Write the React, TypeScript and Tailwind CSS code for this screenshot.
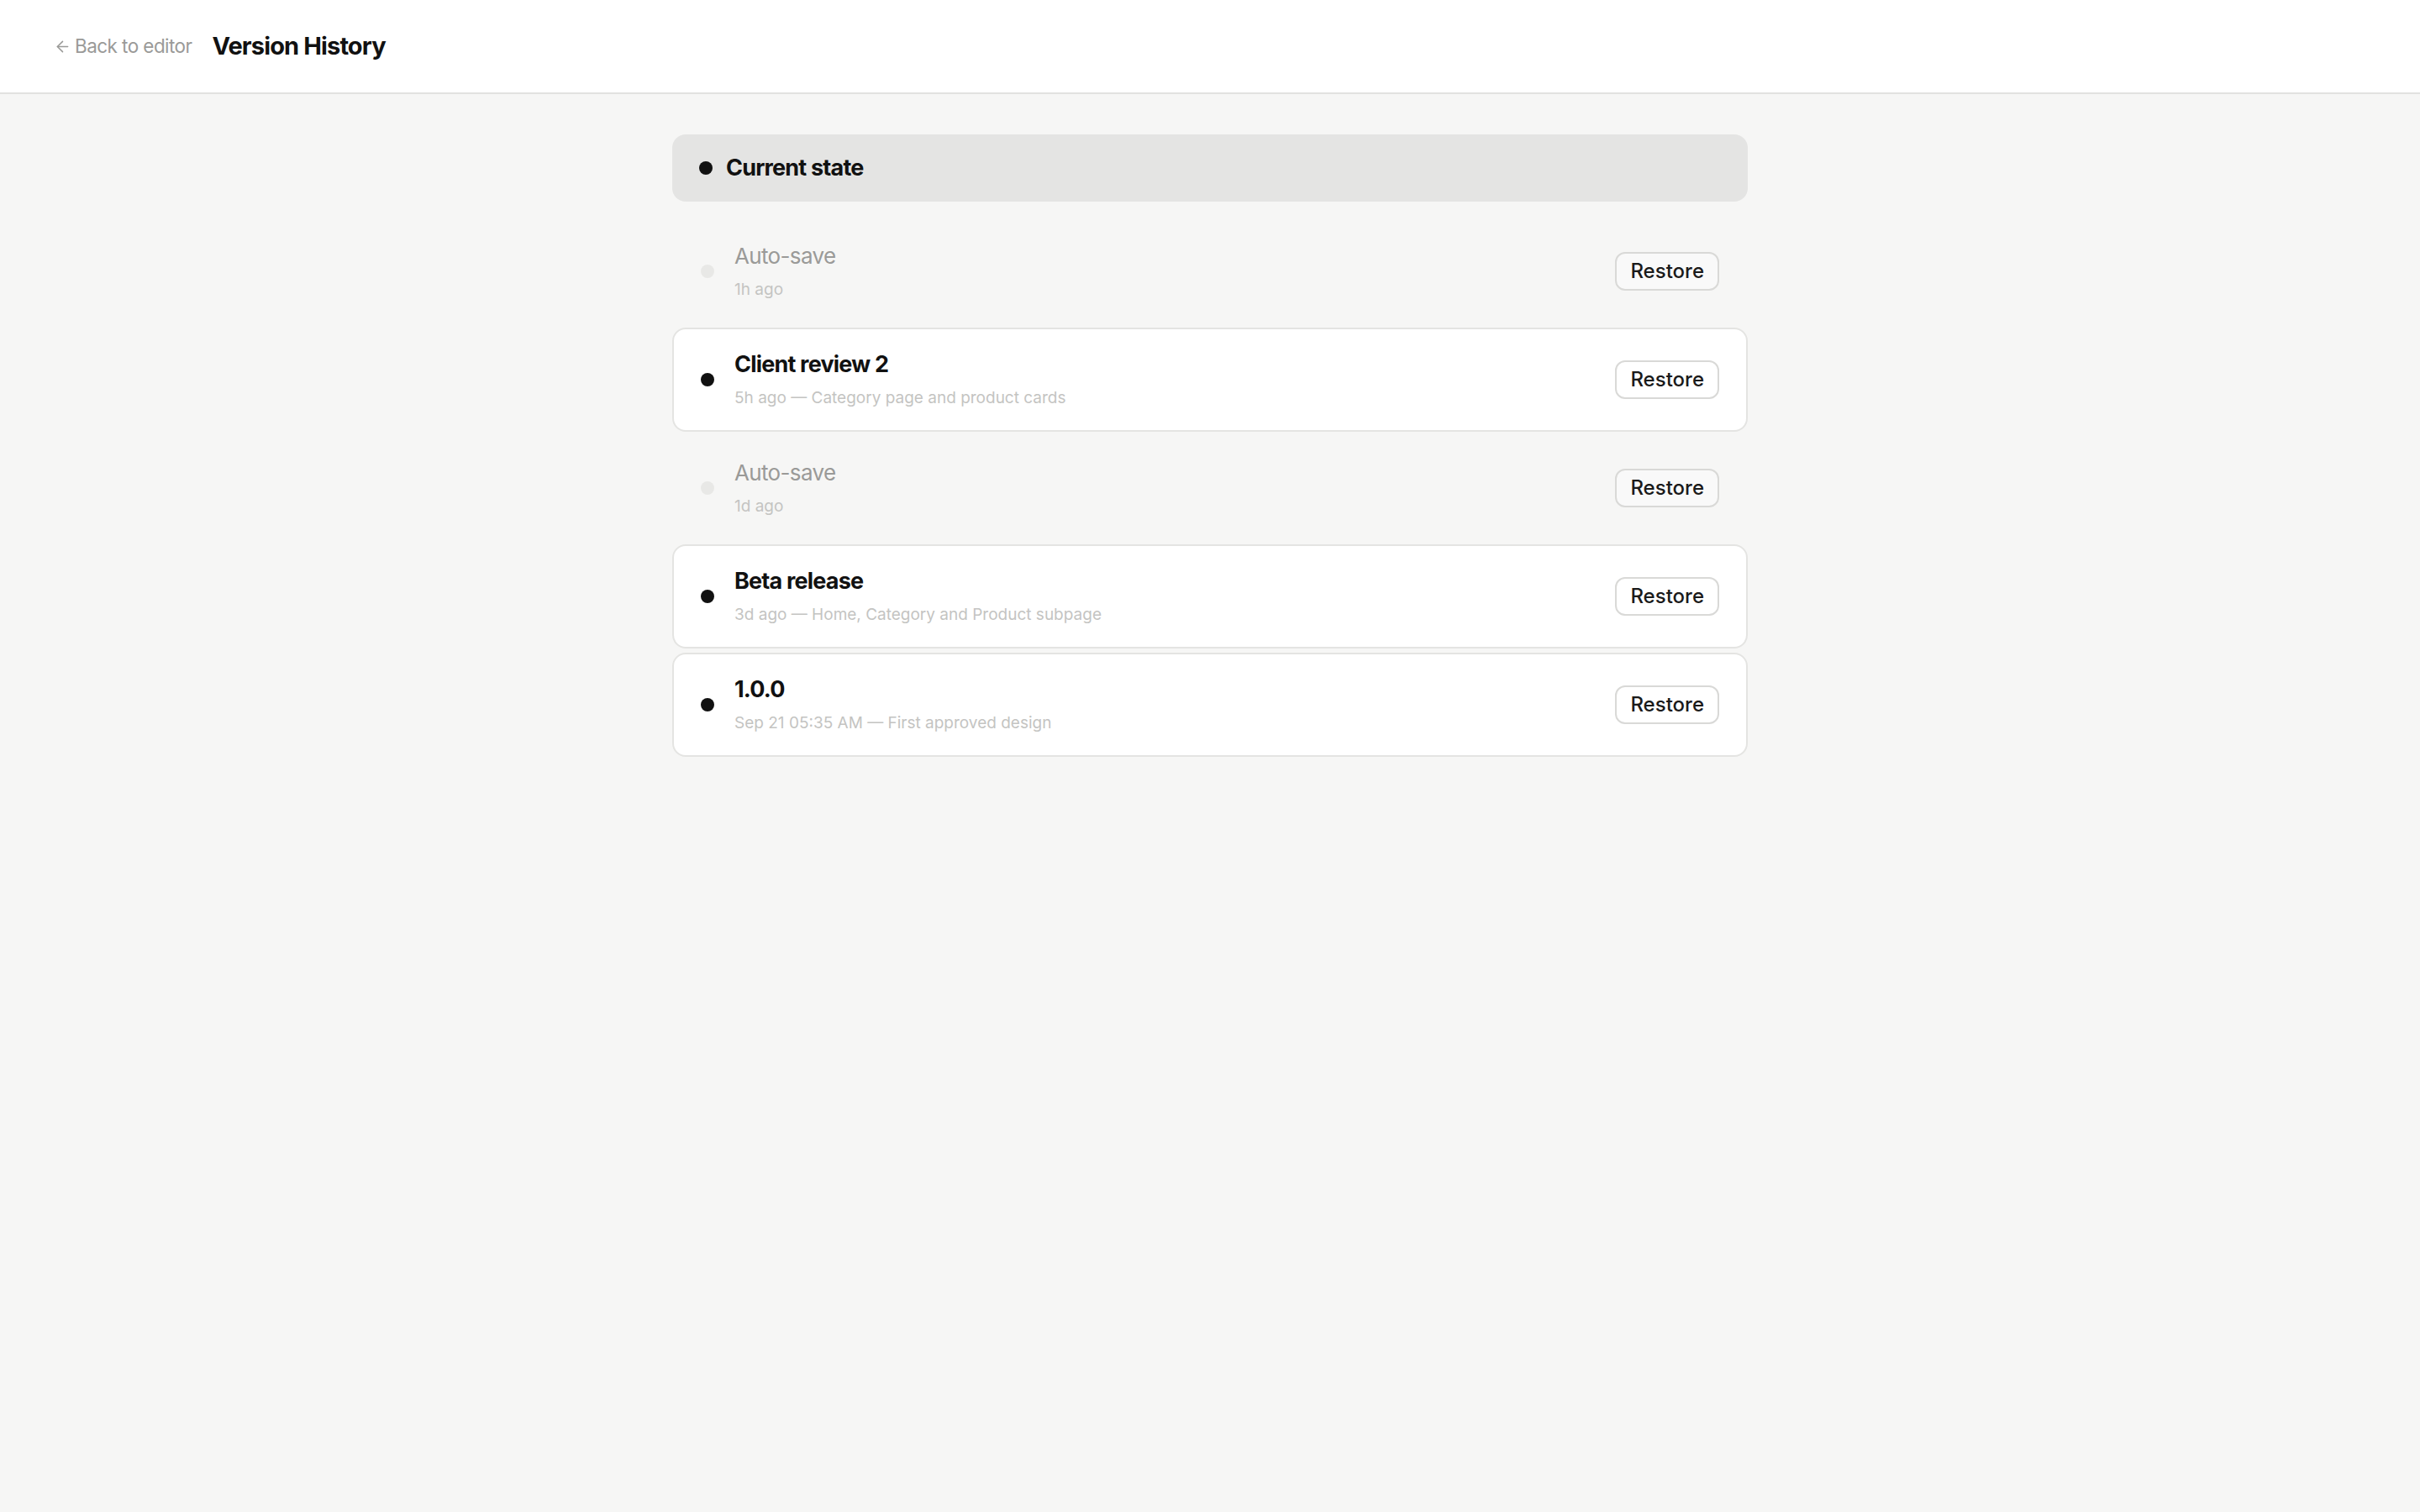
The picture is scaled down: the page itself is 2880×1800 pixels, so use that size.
import { ArrowLeft } from "lucide-react";

type Version = {
  title: string;
  meta: string;
  auto?: boolean;
};

const versions: Version[] = [
  { title: "Auto-save", meta: "1h ago", auto: true },
  { title: "Client review 2", meta: "5h ago — Category page and product cards" },
  { title: "Auto-save", meta: "1d ago", auto: true },
  { title: "Beta release", meta: "3d ago — Home, Category and Product subpage" },
  { title: "1.0.0", meta: "Sep 21 05:35 AM — First approved design" },
];

function VersionRow({ v }: { v: Version }) {
  return (
    <div
      className={
        v.auto
          ? "flex items-center gap-6 rounded-2xl border-2 border-transparent px-8 py-[22px]"
          : "flex items-center gap-6 rounded-2xl border-2 border-[#e4e4e2] bg-white px-8 py-[22px]"
      }
    >
      <span
        className={
          v.auto
            ? "h-4 w-4 shrink-0 rounded-full bg-[#e8e8e6]"
            : "h-4 w-4 shrink-0 rounded-full bg-[#111111]"
        }
      />
      <div className="flex min-w-0 flex-1 flex-col">
        <div
          className={
            v.auto
              ? "text-[26px] leading-10 tracking-tight text-[#9a9a98]"
              : "text-[27px] font-bold leading-10 tracking-[-0.03em] text-[#111111]"
          }
        >
          {v.title}
        </div>
        <div className="mt-1 text-[19px] leading-8 text-[#c4c4c2]">{v.meta}</div>
      </div>
      <button className="rounded-xl border-2 border-[#d9d9d7] bg-white/40 px-4 py-1 text-[24px] font-medium leading-[34px] text-[#1a1a1a]">
        Restore
      </button>
    </div>
  );
}

export default function App() {
  return (
    <div
      className="min-h-screen bg-[#f6f6f5] text-[#111111]"
      style={{ fontFamily: "Inter, 'Liberation Sans', sans-serif" }}
    >
      <header className="flex h-[112px] items-center gap-6 border-b-2 border-[#e2e2e0] bg-white px-16">
        <a className="flex items-center gap-1 text-[22.5px] tracking-tight text-[#9a9a98]">
          <ArrowLeft className="h-[21px] w-[21px]" strokeWidth={1.75} />
          Back to editor
        </a>
        <h1 className="text-[29px] font-bold tracking-[-0.03em] text-[#111111]">Version History</h1>
      </header>

      <main className="mx-auto flex max-w-[1280px] flex-col pt-12">
        <div className="mb-[21px] flex h-20 items-center gap-4 rounded-2xl bg-[#e4e4e3] px-8">
          <span className="h-4 w-4 rounded-full bg-[#111111]" />
          <span className="text-[27px] font-bold tracking-[-0.03em]">Current state</span>
        </div>
        <div className="flex flex-col gap-[5px]">
          {versions.map((v, i) => (
            <VersionRow key={i} v={v} />
          ))}
        </div>
      </main>
    </div>
  );
}
